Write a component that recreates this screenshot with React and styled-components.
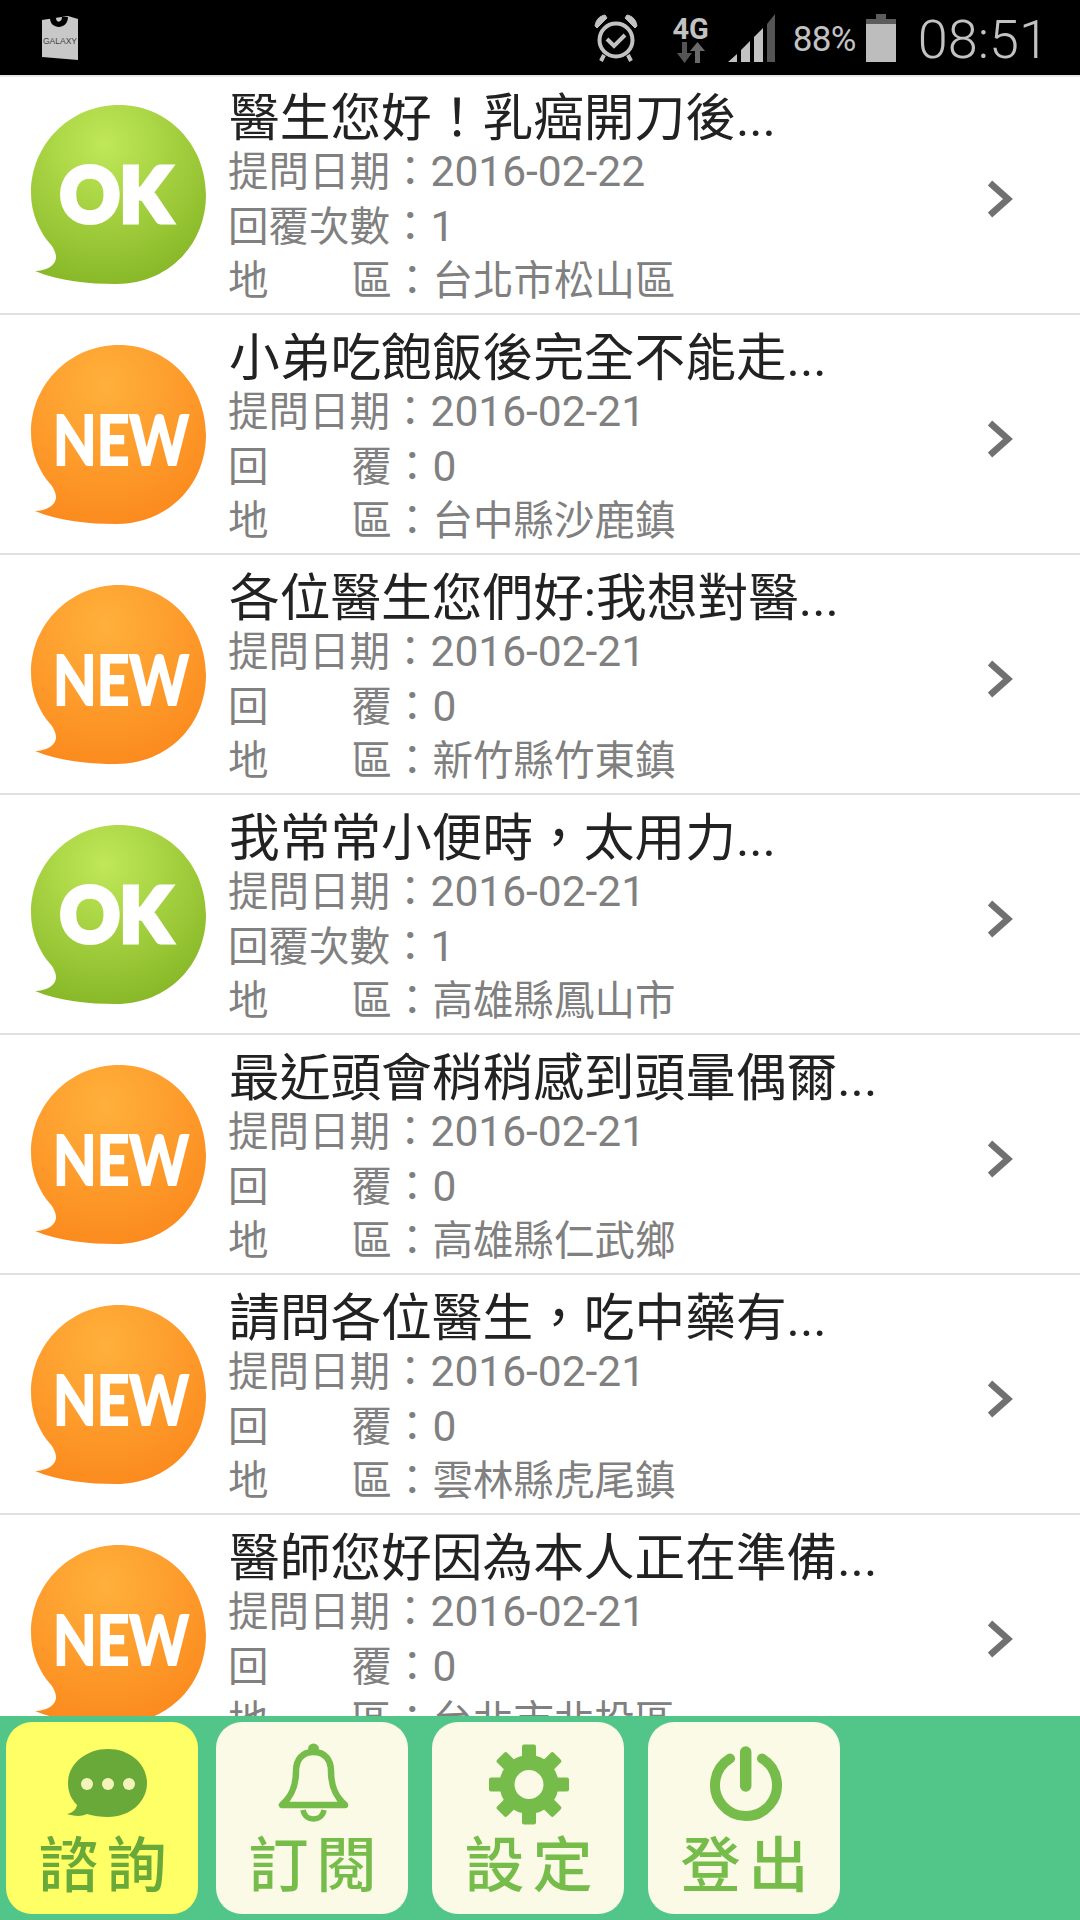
import React from "react";
import styled, { createGlobalStyle } from "styled-components";

const Global = createGlobalStyle`
  html, body { margin: 0; padding: 0; background: #fff; }
  * { box-sizing: border-box; }
`;
const CJK = `Roboto, "Noto Sans CJK TC", sans-serif`;

const Page = styled.div`
  width: 1080px; height: 1920px; display: flex; flex-direction: column; overflow: hidden;
  font-family: ${CJK}; background: #fff;
`;
const StatusBar = styled.header`
  flex: 0 0 77px; height: 77px; background: #000; border-bottom: 2px solid #e6e6e6;
  display: flex; align-items: center; padding: 0 31px 0 42px; color: #c2c2c2;
`;
const StatusRight = styled.div`
  margin-left: auto; display: flex; align-items: center;
`;
const NetWrap = styled.div`
  width: 38px; margin-left: 34px; display: flex; flex-direction: column; align-items: center; margin-top: 3px;
`;
const NetText = styled.span`
  font: 700 29px/26px "Roboto", sans-serif; color: #c2c2c2;
`;
const Signal = styled.svg`
  margin-left: 18px; width: 47px; height: 48px;
`;
const Percent = styled.span`
  font: 400 35px/1 "Roboto", sans-serif; margin: 4px 0 0 18px; letter-spacing: -0.6px;
`;
const Battery = styled.svg`
  margin-left: 10px; width: 30px; height: 48px;
`;
const Clock = styled.span`
  font: 300 54px/1 "Roboto", sans-serif; margin: 4px 0 0 22px;
`;
const List = styled.main`
  flex: 1 1 auto; min-height: 0; overflow: hidden;
`;
const Row = styled.article`
  flex: 0 0 auto; height: 240px; display: flex; align-items: center; border-bottom: 2px solid #e0e0e0; padding: 0 67px 0 31px;
  &:first-child { height: 238px; padding-bottom: 2px; }
`;
const Body = styled.div`
  margin-left: 21px; margin-top: 12px; display: flex; flex-direction: column; flex: 1; min-width: 0;
`;
const Title = styled.div`
  font-size: 50.7px; line-height: 52px; padding-top: 2px; color: #222; white-space: nowrap; margin-left: 1px;
`;
const Meta = styled.div`
  display: flex; align-items: baseline; font-size: 40.5px; line-height: 54.5px; color: #808080; white-space: nowrap;
`;
const Label = styled.span`
  display: flex; justify-content: space-between; width: ${p => (p.$spaced ? 164 : 162)}px;
`;
const Sep = styled.span`
  width: 40.5px; text-align: center;
`;
const Digits = styled.span`
  font-size: 42.5px;
`;
const Chevron = styled.svg`
  flex: 0 0 auto; width: 26px; height: 38px; margin-top: 10px;
`;
const Nav = styled.nav`
  flex: 0 0 204px; height: 204px; background: #52c688; display: flex; gap: 24px; padding: 6px 0 6px 6px;
`;
const NavButton = styled.button`
  width: 192px; height: 192px; border: 0; border-radius: 26px; padding: 20px 0 0;
  background: ${p => (p.$active ? "#ffff66" : "#fafae6")};
  color: ${p => (p.$active ? "#69a93a" : "#76bc4a")};
  display: flex; flex-direction: column; align-items: center; font-family: inherit;
  &:first-child { margin-right: -6px; }
`;
const NavIcon = styled.svg`
  width: 90px; height: 84px; flex: 0 0 auto;
`;
const NavLabel = styled.span`
  font-size: 60px; line-height: 70px; letter-spacing: 8px; margin-left: 9px; margin-top: 6px; font-weight: 500;
  color: inherit; filter: blur(0.6px);
`;
const BubbleBox = styled.svg`
  flex: 0 0 auto; width: 176px; height: 180px; margin-top: 2px;
`;

const Bubble = ({ kind }) => {
  const ok = kind === "ok";
  const id = ok ? "gOk" : "gNew";
  return (
    <BubbleBox viewBox="0 0 176 180">
      <defs>
        <radialGradient id={id} cx="42%" cy="22%" r="85%">
          <stop offset="0" stopColor={ok ? "#c0e858" : "#ffb03c"} />
          <stop offset="1" stopColor={ok ? "#84b524" : "#fb881c"} />
        </radialGradient>
      </defs>
      <path
        d="M88 0C137 0 175 40 175 90C175 140 137 179 85 179C58 179 28 176 4 166C14 166 25 161 25 152C25 148 23 145 21 141C8 127 0 108 0 88C0 39 39 0 88 0Z"
        fill={`url(#${id})`}
      />
      {ok ? (
        <text x="29" y="117" fontFamily="Lato, sans-serif" fontWeight="900" fontSize="76" fill="#fff" stroke="#fff" strokeWidth="5" textLength="111" lengthAdjust="spacingAndGlyphs">OK</text>
      ) : (
        <text x="22" y="120" fontFamily="Lato, sans-serif" fontWeight="700" fontSize="68" fill="#fff" stroke="#fff" strokeWidth="2" textLength="136" lengthAdjust="spacingAndGlyphs">NEW</text>
      )}
    </BubbleBox>
  );
};

const items = [
  { k: "ok", t: "醫生您好\uFF01乳癌開刀後...", d: "2016-02-22", r: 1, a: "台北市松山區" },
  { k: "new", t: "小弟吃飽飯後完全不能走...", d: "2016-02-21", r: 0, a: "台中縣沙鹿鎮" },
  { k: "new", t: "各位醫生您們好:我想對醫...", d: "2016-02-21", r: 0, a: "新竹縣竹東鎮" },
  { k: "ok", t: "我常常小便時\uFF0C太用力...", d: "2016-02-21", r: 1, a: "高雄縣鳳山市" },
  { k: "new", t: "最近頭會稍稍感到頭暈偶爾...", d: "2016-02-21", r: 0, a: "高雄縣仁武鄉" },
  { k: "new", t: "請問各位醫生\uFF0C吃中藥有...", d: "2016-02-21", r: 0, a: "雲林縣虎尾鎮" },
  { k: "new", t: "醫師您好因為本人正在準備...", d: "2016-02-21", r: 0, a: "台北市北投區" },
];

const icons = {
  chat: (
    <g fill="currentColor">
      <path d="M51 7C73 7 90 22 90 41C90 60 73 75 51 75C44 75 36 74 30 72C24 75 16 74 10 72C15 71 19 68 20 63C14 57 11 50 11 41C11 22 29 7 51 7Z" />
      <g fill="#f4f4b8"><circle cx="30" cy="42" r="6" /><circle cx="51" cy="42" r="6" /><circle cx="72" cy="42" r="6" /></g>
    </g>
  ),
  bell: (
    <g fill="none" stroke="currentColor" strokeWidth="6.5" strokeLinejoin="round">
      <path d="M46.5 10C35 10 29 18 29 29C29 44 25 54 15 63L78 63C68 54 64 44 64 29C64 18 58 10 46.5 10Z" />
      <circle cx="46.5" cy="7" r="5.5" fill="currentColor" stroke="none" />
      <path d="M36 68C38 80 55 80 57 68" strokeWidth="5.5" />
    </g>
  ),
  gear: (
    <g fill="currentColor">
      {[0, 45, 90, 135, 180, 225, 270, 315].map(a => (
        <rect key={a} x="39" y="2.5" width="14" height="18" rx="2" transform={`rotate(${a} 46 42.5)`} />
      ))}
      <circle cx="46" cy="42.5" r="22" fill="none" stroke="currentColor" strokeWidth="15" />
    </g>
  ),
  power: (
    <g fill="none" stroke="currentColor" strokeLinecap="round">
      <path d="M31 16.5A31 31 0 1 0 63 16.5" strokeWidth="10" />
      <path d="M46.7 10L46.7 44" strokeWidth="11.5" />
    </g>
  ),
};

const nav = [
  { i: "chat", l: "諮詢", active: true },
  { i: "bell", l: "訂閱" },
  { i: "gear", l: "設定" },
  { i: "power", l: "登出" },
];

const COLON = "\uFF1A";

export default function App() {
  return (
    <Page>
      <Global />
      <StatusBar>
        <svg width="36" height="44" viewBox="0 0 36 44">
          <path d="M0 4L26 0L36 3L36 44L0 41Z" fill="#c8c8c8" />
          <path d="M8 2C8 14 26 14 26 1L20 1C20 7 14 7 14 2Z" fill="#000" />
          <text x="18" y="28" textAnchor="middle" fontFamily="Liberation Sans, sans-serif" fontSize="8.5" fill="#444">GALAXY</text>
        </svg>
        <StatusRight>
          <svg width="44" height="48" viewBox="0 0 44 48" fill="none" stroke="#c2c2c2">
            <circle cx="22" cy="26" r="16.5" strokeWidth="4" />
            <path d="M13 25L20 32L31 21" strokeWidth="4" />
            <path d="M1 12C2 5 6 2 11 1L13 4L3 14Z" fill="#c2c2c2" strokeWidth="1" />
            <path d="M43 12C42 5 38 2 33 1L31 4L41 14Z" fill="#c2c2c2" strokeWidth="1" />
            <path d="M10 41L7 47M34 41L37 47" strokeWidth="4" />
          </svg>
          <NetWrap>
            <NetText>4G</NetText>
            <svg width="28" height="21" viewBox="0 0 28 21">
              <path d="M5 0H10V11H15L7.5 21L0 11H5Z" fill="#555" />
              <path d="M18 21H23V9H28L20.5 0L13 9H18Z" fill="#6a6a6a" />
            </svg>
          </NetWrap>
          <Signal viewBox="0 0 47 48">
            <path d="M0 48L9 40V48ZM13 36L22 27V48H13ZM26 23L35 14V48H26Z" fill="#c2c2c2" />
            <path d="M39 10L47 0V48H39Z" fill="#555" />
          </Signal>
          <Percent>88%</Percent>
          <Battery viewBox="0 0 30 48">
            <path d="M10 0H20V5H30V48H0V5H10Z" fill="#bdbdbd" />
            <path d="M10 0H20V5H30V10H0V5H10Z" fill="#5c5c5c" />
          </Battery>
          <Clock>08:51</Clock>
        </StatusRight>
      </StatusBar>
      <List>
        {items.map((it, i) => (
          <Row key={i}>
            <Bubble kind={it.k} />
            <Body>
              <Title>{it.t}</Title>
              <Meta><Label>提問日期</Label><Sep>{COLON}</Sep><Digits>{it.d}</Digits></Meta>
              {it.r > 0 ? (
                <Meta><Label>回覆次數</Label><Sep>{COLON}</Sep><Digits>{it.r}</Digits></Meta>
              ) : (
                <Meta><Label $spaced><span>回</span><span>覆</span></Label><Sep>{COLON}</Sep><Digits>{it.r}</Digits></Meta>
              )}
              <Meta><Label $spaced><span>地</span><span>區</span></Label><Sep>{COLON}</Sep><span>{it.a}</span></Meta>
            </Body>
            <Chevron viewBox="0 0 26 38">
              <path d="M3 3L21 19L3 35" fill="none" stroke="#707070" strokeWidth="6.5" />
            </Chevron>
          </Row>
        ))}
      </List>
      <Nav>
        {nav.map(n => (
          <NavButton key={n.i} $active={n.active}>
            <NavIcon viewBox="0 0 90 84">{icons[n.i]}</NavIcon>
            <NavLabel>{n.l}</NavLabel>
          </NavButton>
        ))}
      </Nav>
    </Page>
  );
}
